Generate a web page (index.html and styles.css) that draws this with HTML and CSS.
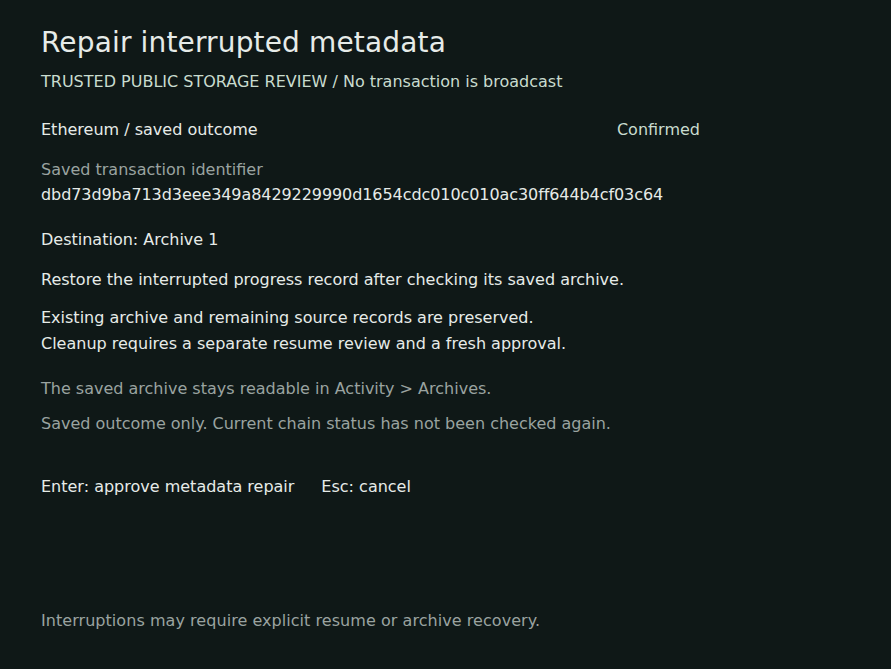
FILE: index.html
```html
<!DOCTYPE html>
<html lang="en">
<head>
  <meta charset="UTF-8">
  <meta name="viewport" content="width=device-width, initial-scale=1.0">
  <title>Repair interrupted metadata</title>
  <link rel="stylesheet" href="styles.css">
</head>
<body>
  <div class="screen">
    <div class="review">
      <h1 class="title">Repair interrupted metadata</h1>
      <p class="subtitle">TRUSTED PUBLIC STORAGE REVIEW / No transaction is broadcast</p>

      <div class="row">
        <span>Ethereum / saved outcome</span>
        <span class="status">Confirmed</span>
      </div>

      <div class="field">
        <div class="label">Saved transaction identifier</div>
        <div class="value">dbd73d9ba713d3eee349a8429229990d1654cdc010c010ac30ff644b4cf03c64</div>
      </div>

      <p class="line dest">Destination: Archive 1</p>
      <p class="line">Restore the interrupted progress record after checking its saved archive.</p>
      <p class="line pair">Existing archive and remaining source records are preserved.<br>Cleanup requires a separate resume review and a fresh approval.</p>

      <p class="muted first">The saved archive stays readable in Activity &gt; Archives.</p>
      <p class="muted">Saved outcome only. Current chain status has not been checked again.</p>

      <div class="keys">
        <span>Enter: approve metadata repair</span>
        <span>Esc: cancel</span>
      </div>
    </div>

    <p class="footer">Interruptions may require explicit resume or archive recovery.</p>
  </div>
</body>
</html>
```

FILE: styles.css
```css
html, body {
  margin: 0;
  height: 100%;
}

body {
  background-color: #0f1817;
  color: #e6ebe8;
  font-family: 'DejaVu Sans', sans-serif;
  font-size: 16px;
}

.screen {
  display: flex;
  flex-direction: column;
  justify-content: space-between;
  height: 100%;
  box-sizing: border-box;
  padding: 26px 41px 38px;
}

.review {
  width: 660px;
}

p {
  margin: 0;
}

.title {
  margin: 0;
  font-size: 28px;
  font-weight: normal;
  line-height: 34px;
  letter-spacing: 0.15px;
}

.subtitle {
  margin-top: 12px;
  color: #c9dccf;
  line-height: 20px;
}

.row {
  display: flex;
  justify-content: space-between;
  margin-top: 28px;
  line-height: 20px;
}

.status {
  color: #c9dccf;
  margin-right: 1px;
}

.field {
  margin-top: 20px;
}

.label {
  color: #9aa3a0;
  line-height: 20px;
}

.value {
  margin-top: 5px;
  line-height: 20px;
  letter-spacing: -0.08px;
}

.line {
  line-height: 20px;
  margin-top: 20px;
}

.line.dest {
  margin-top: 25px;
}

.pair {
  margin-top: 15px;
  line-height: 26px;
}

.muted {
  color: #9aa3a0;
  line-height: 20px;
  margin-top: 15px;
}

.muted.first {
  margin-top: 22px;
}

.keys {
  display: flex;
  gap: 27px;
  margin-top: 43px;
  line-height: 20px;
}

.footer {
  color: #9aa3a0;
  line-height: 20px;
  letter-spacing: 0.05px;
}
```
